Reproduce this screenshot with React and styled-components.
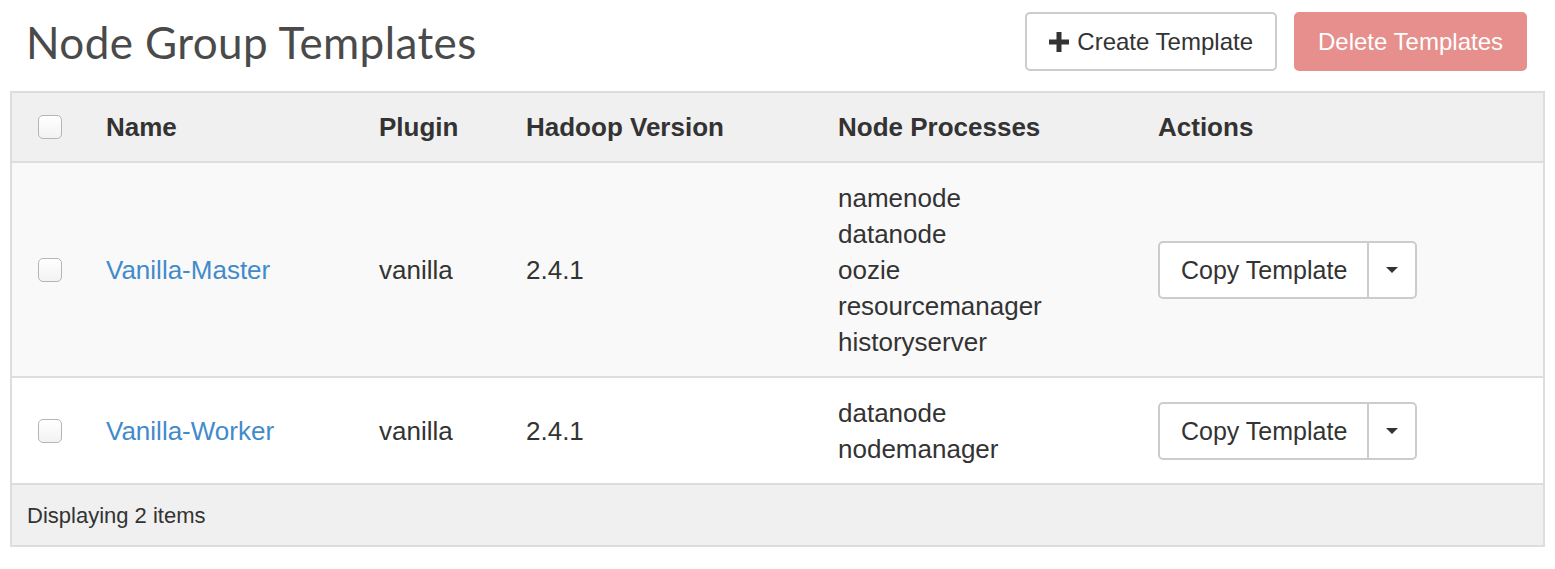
import React from 'react';
import styled, { createGlobalStyle } from 'styled-components';

const GlobalStyle = createGlobalStyle`
  body {
    margin: 0;
    background: #ffffff;
    font-family: "Liberation Sans", Arial, sans-serif;
    color: #333333;
  }
`;

const Page = styled.div`
  padding: 12px 10px 0 10px;
`;

const PageHeader = styled.div`
  display: flex;
  align-items: center;
  justify-content: space-between;
  height: 59px;
  padding: 0 18px 0 16px;
  margin-bottom: 20px;
`;

const Title = styled.h1`
  margin: 0;
  font-family: "Lato", "Noto Sans", sans-serif;
  font-weight: 400;
  font-size: 44px;
  color: #4a4a4a;
  letter-spacing: 0.4px;
`;

const Toolbar = styled.div`
  display: flex;
  gap: 17px;
`;

const Button = styled.button`
  display: flex;
  align-items: center;
  gap: 8px;
  height: 59px;
  padding: 0 22px;
  font-family: "Liberation Sans", Arial, sans-serif;
  font-size: 24px;
  border-radius: 5px;
  border: 2px solid ${(p) => (p.danger ? '#e68f8c' : '#cccccc')};
  background: ${(p) => (p.danger ? '#e68f8c' : '#ffffff')};
  color: ${(p) => (p.danger ? '#ffffff' : '#333333')};
`;

const Table = styled.table`
  width: 100%;
  border-collapse: collapse;
  border: 2px solid #dddddd;
  table-layout: fixed;
  font-size: 26px;
  line-height: 36px;
`;

const HeadCell = styled.th`
  background: #f0f0f0;
  text-align: left;
  font-weight: 700;
  padding: 16px 14px;
  border-bottom: 2px solid #dddddd;
  vertical-align: middle;
`;

const Row = styled.tr`
  background: ${(p) => (p.striped ? '#f9f9f9' : '#ffffff')};
  border-bottom: 2px solid #dddddd;
`;

const Cell = styled.td`
  padding: 17px 14px 16px;
  vertical-align: middle;
`;

const CheckCell = styled(Cell)`
  padding-left: 26px;
`;

const CheckHead = styled(HeadCell)`
  padding-left: 26px;
`;

const Checkbox = styled.span`
  display: block;
  width: 22px;
  height: 22px;
  border: 1px solid #b5b5b5;
  border-radius: 5px;
  background: linear-gradient(#ffffff, #f2f2f2);
`;

const NameLink = styled.a`
  color: #428bca;
  text-decoration: none;
`;

const Processes = styled.div`
  display: flex;
  flex-direction: column;
`;

const SplitButton = styled.div`
  display: inline-flex;
  height: 58px;
  border: 2px solid #cccccc;
  border-radius: 5px;
  background: #ffffff;
  box-sizing: border-box;
  font-size: 25px;
`;

const SplitMain = styled.span`
  display: flex;
  align-items: center;
  padding: 0 20px 0 21px;
  border-right: 2px solid #cccccc;
  color: #333333;
`;

const SplitToggle = styled.span`
  display: flex;
  align-items: center;
  justify-content: center;
  width: 46px;
`;

const Caret = styled.span`
  width: 0;
  height: 0;
  border-left: 6px solid transparent;
  border-right: 6px solid transparent;
  border-top: 6px solid #333333;
`;

const FooterCell = styled.td`
  background: #f0f0f0;
  font-size: 22px;
  line-height: 29px;
  padding: 16px 15px 15px;
`;

const PlusIcon = () => (
  <svg width="20" height="20" viewBox="0 0 20 20">
    <path d="M7.5 0h5v7.5H20v5h-7.5V20h-5v-7.5H0v-5h7.5z" fill="#333333" />
  </svg>
);

const templates = [
  {
    name: 'Vanilla-Master',
    plugin: 'vanilla',
    version: '2.4.1',
    processes: ['namenode', 'datanode', 'oozie', 'resourcemanager', 'historyserver'],
  },
  {
    name: 'Vanilla-Worker',
    plugin: 'vanilla',
    version: '2.4.1',
    processes: ['datanode', 'nodemanager'],
  },
];

export default function App() {
  return (
    <Page>
      <GlobalStyle />
      <PageHeader>
        <Title>Node Group Templates</Title>
        <Toolbar>
          <Button>
            <PlusIcon />
            Create Template
          </Button>
          <Button danger>Delete Templates</Button>
        </Toolbar>
      </PageHeader>
      <Table>
        <colgroup>
          <col style={{ width: 81 }} />
          <col style={{ width: 273 }} />
          <col style={{ width: 147 }} />
          <col style={{ width: 312 }} />
          <col style={{ width: 320 }} />
          <col />
        </colgroup>
        <thead>
          <tr>
            <CheckHead>
              <Checkbox />
            </CheckHead>
            <HeadCell>Name</HeadCell>
            <HeadCell>Plugin</HeadCell>
            <HeadCell>Hadoop Version</HeadCell>
            <HeadCell>Node Processes</HeadCell>
            <HeadCell>Actions</HeadCell>
          </tr>
        </thead>
        <tbody>
          {templates.map((t, i) => (
            <Row key={t.name} striped={i % 2 === 0}>
              <CheckCell>
                <Checkbox />
              </CheckCell>
              <Cell>
                <NameLink href="#">{t.name}</NameLink>
              </Cell>
              <Cell>{t.plugin}</Cell>
              <Cell>{t.version}</Cell>
              <Cell>
                <Processes>
                  {t.processes.map((p) => (
                    <span key={p}>{p}</span>
                  ))}
                </Processes>
              </Cell>
              <Cell>
                <SplitButton>
                  <SplitMain>Copy Template</SplitMain>
                  <SplitToggle>
                    <Caret />
                  </SplitToggle>
                </SplitButton>
              </Cell>
            </Row>
          ))}
        </tbody>
        <tfoot>
          <tr>
            <FooterCell colSpan={6}>Displaying 2 items</FooterCell>
          </tr>
        </tfoot>
      </Table>
    </Page>
  );
}
